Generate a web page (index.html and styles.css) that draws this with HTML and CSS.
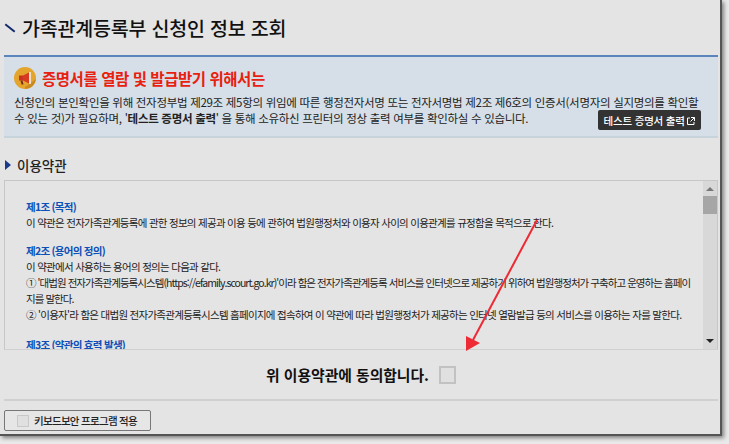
FILE: index.html
```html
<!DOCTYPE html>
<html lang="ko">
<head>
    <meta charset="UTF-8">
    <title>가족관계등록부 신청인 정보 조회</title>
    <link rel="stylesheet" href="styles.css">
</head>
<body>
    <div class="window">
        <div class="page-title">
            <span class="title-mark"></span>
            <h1>가족관계등록부 신청인 정보 조회</h1>
        </div>

        <div class="notice">
            <div class="notice-head">
                <svg class="notice-icon" viewBox="0 0 22 22" width="22" height="22">
                    <circle cx="11" cy="11" r="11" fill="#e5a52d"/>
                    <path d="M11 20 L22 12 A11 11 0 0 1 11 22 Z" fill="#c98a22"/>
                    <path d="M5 8.500h4v5H5z" fill="#c8321f"/>
                    <path d="M9 8.500l6-3v11l-6-3z" fill="#d93a22"/>
                    <path d="M15 5h2v12h-2z" fill="#f4e3c0"/>
                    <path d="M6.500 13.500h2l1 4h-2z" fill="#7a2b18"/>
                </svg>
                <h2>증명서를 열람 및 발급받기 위해서는</h2>
            </div>
            <p class="notice-text">신청인의 본인확인을 위해 전자정부법 제29조 제5항의 위임에 따른 행정전자서명 또는 전자서명법 제2조 제6호의 인증서(서명자의 실지명의를 확인할<br>수 있는 것)가 필요하며, '<b>테스트 증명서 출력</b>' 을 통해 소유하신 프린터의 정상 출력 여부를 확인하실 수 있습니다.</p>
            <button class="test-button">테스트 증명서 출력
                <svg viewBox="0 0 8 8" width="8" height="8">
                    <path d="M3 1H.5v6.500h6.500V5M4 .5h3.500V4M7.500 .5L3.500 4.500" fill="none" stroke="#fff" stroke-width="1"/>
                </svg>
            </button>
        </div>

        <div class="section-title">
            <span class="section-mark"></span>
            <h3>이용약관</h3>
        </div>

        <div class="terms">
            <div class="terms-body">
                <h4>제1조 (목적)</h4>
                <p>이 약관은 전자가족관계등록에 관한 정보의 제공과 이용 등에 관하여 법원행정처와 이용자 사이의 이용관계를 규정함을 목적으로 한다.</p>
                <h4 class="gap">제2조 (용어의 정의)</h4>
                <p>이 약관에서 사용하는 용어의 정의는 다음과 같다.</p>
                <p class="tight">① '대법원 전자가족관계등록시스템(https://efamily.scourt.go.kr)'이라 함은 전자가족관계등록 서비스를 인터넷으로 제공하기 위하여 법원행정처가 구축하고 운영하는 홈페이<br>지를 말한다.</p>
                <p>② '이용자'라 함은 대법원 전자가족관계등록시스템 홈페이지에 접속하여 이 약관에 따라 법원행정처가 제공하는 인터넷 열람발급 등의 서비스를 이용하는 자를 말한다.</p>
                <h4 class="gap-wide">제3조 (약관의 효력 발생)</h4>
            </div>
            <div class="scrollbar">
                <span class="arrow-up"></span>
                <span class="thumb"></span>
                <span class="arrow-down"></span>
            </div>
        </div>

        <div class="agree">
            <span>위 이용약관에 동의합니다.</span>
            <span class="check-box"></span>
        </div>

        <div class="footer">
            <button class="keyboard-button"><span class="small-check"></span>키보드보안 프로그램 적용</button>
        </div>

        <svg class="red-arrow" viewBox="0 0 729 444" width="729" height="444">
            <line x1="537" y1="220" x2="473" y2="340" stroke="#ee2a35" stroke-width="2"/>
            <path d="M466 351 L466 336 L480 343 Z" fill="#ee2a35"/>
        </svg>
    </div>
</body>
</html>
```
FILE: styles.css
```css
* {
    margin: 0;
    padding: 0;
    box-sizing: border-box;
}

body {
    font-family: "Noto Sans CJK KR", "Noto Sans", sans-serif;
    background: #e9e9e9;
    width: 729px;
    height: 444px;
    overflow: hidden;
    color: #222;
}

.window {
    position: relative;
    width: 722px;
    height: 436px;
    padding: 0 2px 0 4px;
    background: #e4e4e4;
    border-right: 2px solid #555;
    border-bottom: 2px solid #555;
    box-shadow: 2px 2px 4px rgba(0, 0, 0, 0.45);
    display: flex;
    flex-direction: column;
}

.page-title {
    height: 55px;
    display: flex;
    align-items: center;
    gap: 6px;
}

.title-mark {
    width: 12px;
    height: 2px;
    background: #13296b;
    transform: rotate(38deg);
    margin-top: 1px;
}

h1 {
    font-size: 19.500px;
    font-weight: 500;
    letter-spacing: -0.2px;
    color: #111;
    white-space: nowrap;
}

.notice {
    position: relative;
    height: 83px;
    padding: 10px 10px 0 10px;
    background: #d6dfe7;
    border-top: 2px solid #5b86bd;
    border-bottom: 2px solid #c8d4dc;
}

.notice-head {
    display: flex;
    align-items: center;
    gap: 6px;
    height: 22px;
}

h2 {
    font-size: 15.500px;
    font-weight: 700;
    letter-spacing: -0.45px;
    color: #e8200f;
    white-space: nowrap;
}

.notice-text {
    margin-top: 5px;
    font-size: 11.500px;
    letter-spacing: -0.3px;
    line-height: 16px;
    color: #222;
    white-space: nowrap;
}

.test-button {
    position: absolute;
    right: 17px;
    bottom: 6px;
    height: 20px;
    width: 103px;
    background: #333;
    border: 0;
    border-radius: 2px;
    color: #fff;
    font-family: inherit;
    font-size: 10.500px;
    font-weight: 500;
    letter-spacing: -0.2px;
}

.section-title {
    height: 42px;
    display: flex;
    align-items: center;
    gap: 6px;
    padding: 12px 0 0 1px;
}

.section-mark {
    width: 0;
    height: 0;
    border-left: 6px solid #1c3a8a;
    border-top: 5px solid transparent;
    border-bottom: 5px solid transparent;
}

h3 {
    font-size: 13.500px;
    font-weight: 500;
    color: #222;
}

.terms {
    height: 170px;
    display: flex;
    border: 1px solid #c6c8c8;
    border-bottom-color: #d0d0d0;
    overflow: hidden;
}

.terms-body {
    flex: 1;
    min-width: 0;
    padding: 18px 0 0 21px;
    font-size: 10.500px;
    letter-spacing: -0.72px;
    line-height: 16px;
    color: #222;
    white-space: nowrap;
}

.terms-body .tight {
    letter-spacing: -0.95px;
}

h4 {
    font-size: 10.500px;
    font-weight: 700;
    color: #0c50b8;
}

h4.gap {
    margin-top: 12px;
}

h4.gap-wide {
    margin-top: 14px;
}

.scrollbar {
    flex: none;
    width: 14px;
    background: #d8d8d8;
    display: flex;
    flex-direction: column;
    align-items: center;
}

.arrow-up {
    margin-top: 6px;
    border-left: 4px solid transparent;
    border-right: 4px solid transparent;
    border-bottom: 4px solid #777;
}

.thumb {
    width: 14px;
    height: 18px;
    margin-top: 5px;
    background: #a6a6a6;
}

.arrow-down {
    margin-top: auto;
    margin-bottom: 6px;
    border-left: 4px solid transparent;
    border-right: 4px solid transparent;
    border-top: 4px solid #222;
}

.agree {
    height: 51px;
    display: flex;
    align-items: center;
    justify-content: center;
    gap: 10px;
    font-size: 14.800px;
    font-weight: 700;
    color: #111;
    border-bottom: 2px solid #d0d0d0;
}

.check-box {
    width: 17px;
    height: 18px;
    border: 2px solid #c2c2c2;
    background: #e0e0e0;
}

.footer {
    padding-top: 9px;
}

.keyboard-button {
    width: 147px;
    height: 21px;
    display: flex;
    align-items: center;
    gap: 5px;
    padding-left: 12px;
    background: #e6e6e6;
    border: 1px solid #777;
    border-radius: 2px;
    font-family: inherit;
    font-size: 10.500px;
    font-weight: 500;
    letter-spacing: -0.7px;
    color: #222;
}

.small-check {
    width: 12px;
    height: 12px;
    border: 1px solid #c8c8c8;
    background: #e0e0e0;
}

.red-arrow {
    position: absolute;
    left: 0;
    top: 0;
    pointer-events: none;
}
```
